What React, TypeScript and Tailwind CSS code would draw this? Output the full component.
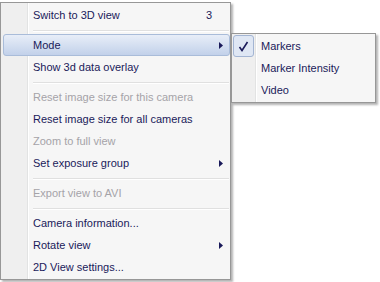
import { FC } from "react";

type Item =
  | { kind: "item"; label: string; disabled?: boolean; shortcut?: string; sub?: boolean; hot?: boolean }
  | { kind: "sep" };

const items: Item[] = [
  { kind: "item", label: "Switch to 3D view", shortcut: "3" },
  { kind: "sep" },
  { kind: "item", label: "Mode", sub: true, hot: true },
  { kind: "item", label: "Show 3d data overlay" },
  { kind: "sep" },
  { kind: "item", label: "Reset image size for this camera", disabled: true },
  { kind: "item", label: "Reset image size for all cameras" },
  { kind: "item", label: "Zoom to full view", disabled: true },
  { kind: "item", label: "Set exposure group", sub: true },
  { kind: "sep" },
  { kind: "item", label: "Export view to AVI", disabled: true },
  { kind: "sep" },
  { kind: "item", label: "Camera information..." },
  { kind: "item", label: "Rotate view", sub: true },
  { kind: "item", label: "2D View settings..." },
];

const Arrow: FC = () => (
  <svg width="4" height="7" viewBox="0 0 4 7" className="block">
    <path d="M0 0 L4 3.5 L0 7 Z" fill="#1a1a5a" />
  </svg>
);

const Gutter: FC<{ w: string }> = ({ w }) => (
  <div className={`absolute top-0 bottom-0 left-0 ${w} bg-[#efefef] border-r border-[#e2e3e3]`}>
    <div className="absolute top-0 bottom-0 -right-[2px] w-px bg-white" />
  </div>
);

const MainMenu: FC = () => (
  <div className="relative w-[231px] border border-[#979797] bg-[#f6f6f6] py-px shadow-[2px_2px_2px_rgba(0,0,0,0.3)]">
    <Gutter w="w-[27px]" />
    <div className="relative flex flex-col">
      {items.map((it, i) =>
        it.kind === "sep" ? (
          <div key={i} className="h-[8px] pl-[32px] pr-[1px] pt-[4px]">
            <div className="h-px bg-[#e0e0e0]" />
            <div className="h-px bg-white" />
          </div>
        ) : (
          <div key={i} className="relative h-[22px] px-[2px]">
            {it.hot && (
              <div className="absolute inset-y-0 left-[2px] right-[0px] rounded-[3px] border border-[#a9bcd9] bg-gradient-to-b from-[#e8eef8] to-[#c2d1ea]" />
            )}
            <div
              className={`relative flex h-full items-center pl-[30px] pr-[5px] ${
                it.disabled ? "text-[#a5a3a8]" : "text-[#1a1a5a]"
              }`}
            >
              <span className="flex-1 whitespace-nowrap">{it.label}</span>
              {it.shortcut && <span className="mr-[11px]">{it.shortcut}</span>}
              {it.sub && <Arrow />}
            </div>
          </div>
        )
      )}
    </div>
  </div>
);

const SubMenu: FC = () => (
  <div className="absolute left-[231px] top-[33px] w-[145px] border border-[#979797] bg-[#f6f6f6] py-px shadow-[2px_2px_2px_rgba(0,0,0,0.3)]">
    <Gutter w="w-[24px]" />
    <div className="relative flex flex-col">
      {["Markers", "Marker Intensity", "Video"].map((s, i) => (
        <div key={s} className="relative flex h-[22px] items-center text-[#1a1a5a]">
          {i === 0 && (
            <div className="absolute left-[1px] top-0 flex h-[22px] w-[21px] items-center justify-center rounded-[3px] border border-[#a3b5d3] bg-[#dfe7f4]">
              <svg width="11" height="11" viewBox="0 0 11 11">
                <path d="M1.5 6 L4 9.5 L9.5 1" stroke="#1a1a5a" strokeWidth="1.6" fill="none" />
              </svg>
            </div>
          )}
          <span className="pl-[29px] whitespace-nowrap">{s}</span>
        </div>
      ))}
    </div>
  </div>
);

export default function App() {
  return (
    <div className="relative h-[282px] w-[380px] bg-white pt-[2px] font-['Liberation_Sans',Arial,sans-serif] text-[11px]">
      <MainMenu />
      <SubMenu />
    </div>
  );
}
